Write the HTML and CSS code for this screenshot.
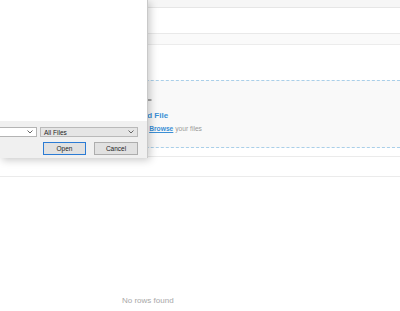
FILE: index.html
```html
<!DOCTYPE html>
<html lang="en">
<head>
    <meta charset="UTF-8">
    <title>Upload - Records</title>
    <link rel="stylesheet" href="styles.css">
</head>
<body>
    <div class="page">
        <div class="topbar"></div>
        <div class="toolbar"></div>
        <div class="tabs"></div>
        <div class="gap"></div>

        <!-- Upload drop zone -->
        <div class="dropzone">
            <svg class="dz-icon" width="12" height="12" viewBox="0 0 12 12">
                <path d="M6 0.5V11.5M0.5 6H11.5" stroke="#555" stroke-width="1" fill="none"/>
            </svg>
            <div class="dz-title">Upload File</div>
            <div class="dz-hint">Drop or <a href="#" class="dz-link">Browse</a> your files</div>
        </div>

        <!-- Grid -->
        <div class="grid">
            <div class="grid-head"></div>
            <div class="grid-body">
                <span class="grid-empty">No rows found</span>
            </div>
        </div>
    </div>

    <!-- Native file dialog on top -->
    <div class="dialog">
        <div class="dialog-body"></div>
        <div class="dialog-foot">
            <div class="foot-row">
                <div class="combo">
                    <svg class="chev" width="6" height="4" viewBox="0 0 6 4"><path d="M0.5 0.5L3 3L5.5 0.5" stroke="#666" fill="none"/></svg>
                </div>
                <div class="filter">
                    <span>All Files</span>
                    <svg class="chev" width="6" height="4" viewBox="0 0 6 4"><path d="M0.5 0.5L3 3L5.5 0.5" stroke="#666" fill="none"/></svg>
                </div>
            </div>
            <div class="foot-row buttons">
                <button class="btn btn-primary">Open</button>
                <button class="btn">Cancel</button>
            </div>
        </div>
    </div>
</body>
</html>
```

FILE: styles.css
```css
/* Basic Reset */
html,
body {
    margin: 0;
    padding: 0;
    background: #ffffff;
    font-family: 'Liberation Sans', Arial, sans-serif;
    overflow: hidden;
}

.page {
    width: 400px;
    height: 311px;
    display: flex;
    flex-direction: column;
}

.page > * {
    flex-shrink: 0;
}

/* Header strips */
.topbar {
    height: 7px;
    background: #f6f6f6;
    border-bottom: 1px solid #e6e6e6;
}

.toolbar {
    height: 25px;
    border-bottom: 1px solid #e9e9e9;
}

.tabs {
    height: 10px;
    background: #fafafa;
    border-bottom: 1px solid #ececec;
}

.gap {
    height: 35px;
}

/* Drop zone */
.dropzone {
    height: 68px;
    box-sizing: border-box;
    background: #f9f9f9;
    border-top: 1px dashed #a9cfe9;
    border-bottom: 1px dashed #a9cfe9;
    padding: 13px 0 0 125px;
}

.dz-icon {
    display: block;
    margin-left: 15px;
}

.dz-title {
    margin-top: 5px;
    font-size: 8px;
    line-height: 10px;
    font-weight: bold;
    color: #3b8fd5;
}

.dz-hint {
    margin-top: 4px;
    font-size: 6.7px;
    line-height: 8px;
    color: #9a9a9a;
}

.dz-link {
    color: #3b8fd5;
    font-weight: bold;
}

/* Grid */
.grid {
    flex: 1;
    display: flex;
    flex-direction: column;
    margin-top: 8px;
}

.grid-head {
    height: 19px;
    border-top: 1px solid #ebebeb;
    border-bottom: 1px solid #ebebeb;
}

.grid-body {
    flex: 1;
    padding: 119px 0 0 122px;
    font-size: 8px;
    line-height: 10px;
}

.grid-empty {
    color: #a8a8a8;
}

/* File dialog */
.dialog {
    position: absolute;
    left: 0;
    top: 0;
    width: 147px;
    height: 158px;
    background: #ffffff;
    border-right: 1px solid #c9c9c9;
    box-shadow: 2px 2px 8px rgba(0, 0, 0, 0.22);
    display: flex;
    flex-direction: column;
}

.dialog-body {
    flex: 1;
}

.dialog-foot {
    height: 37px;
    box-sizing: border-box;
    background: #f0f0f0;
    padding: 6px 9px 4px 0;
    display: flex;
    flex-direction: column;
    gap: 5px;
}

.foot-row {
    display: flex;
    gap: 3px;
}

.combo,
.filter {
    height: 10px;
    box-sizing: border-box;
    display: flex;
    align-items: center;
    justify-content: space-between;
    padding: 0 3px 0 3px;
    font-size: 6.5px;
    color: #222;
}

.combo {
    width: 38px;
    margin-left: -1px;
    background: #ffffff;
    border: 1px solid #b4b4b4;
    justify-content: flex-end;
}

.filter {
    width: 98px;
    background: #e5e5e5;
    border: 1px solid #b9b9b9;
}

.buttons {
    justify-content: flex-end;
    gap: 8px;
}

.btn {
    height: 13px;
    width: 44px;
    padding: 0;
    box-sizing: border-box;
    background: #e1e1e1;
    border: 1px solid #adadad;
    font-family: 'Liberation Sans', Arial, sans-serif;
    font-size: 6.5px;
    color: #222;
}

.btn-primary {
    width: 43px;
    border-color: #2b7bd4;
}
```
